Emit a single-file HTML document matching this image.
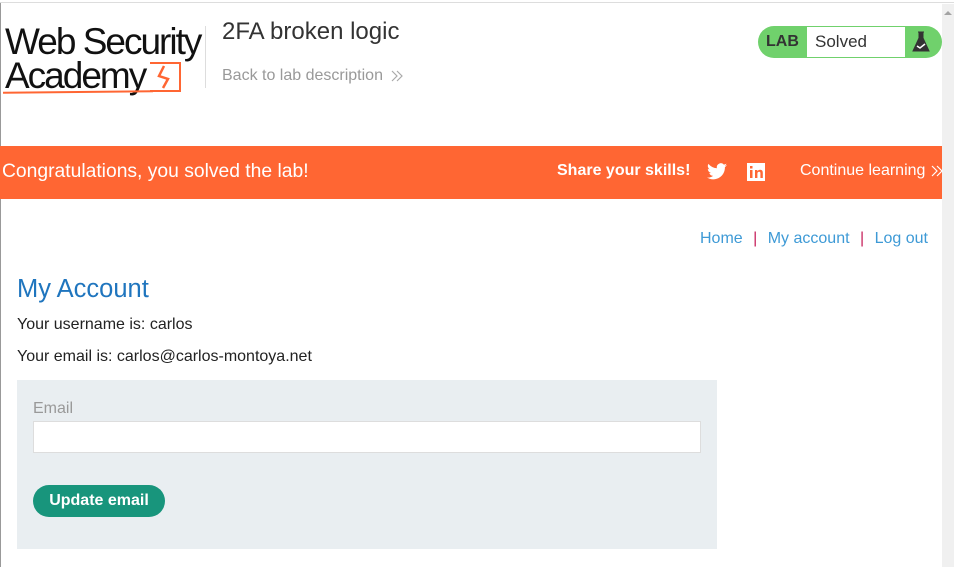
<!DOCTYPE html>
<html><head><style>
*{margin:0;padding:0;box-sizing:border-box}
body{width:954px;height:567px;overflow:hidden;background:#fff;font-family:"Liberation Sans",Arial,sans-serif;position:relative}
.abs{position:absolute}
</style></head><body>
<div class="abs" style="left:0;top:0;width:954px;height:3px;background:#fff;border-bottom:1px solid #ddd"></div>
<div class="abs" style="left:0;top:3px;width:1px;height:564px;background:#999"></div>
<div class="abs" style="left:942px;top:4px;width:12px;height:563px;background:#f0f0f0"></div>
<div class="abs" style="left:944px;top:11px;width:0;height:0;border-left:4px solid transparent;border-right:4px solid transparent;border-bottom:4px solid #a3a3a3"></div>
<!-- logo -->
<div class="abs" style="left:5px;top:25px;font-size:37px;letter-spacing:-2px;color:#111;line-height:34px">Web Security<br>Academy</div>
<div class="abs" style="left:150px;top:62px;width:31px;height:30px;border:2px solid #ff6633;border-left:none"></div>
<svg class="abs" style="left:150px;top:60px" width="32" height="35"><path d="M14 6 L9 16 L18 19 L13 28" stroke="#ff6633" stroke-width="2.5" fill="none"/></svg>
<div class="abs" style="left:3px;top:91px;width:150px;height:2px;background:#ff6633;transform:rotate(-0.6deg)"></div>
<div class="abs" style="left:205px;top:26px;width:1px;height:62px;background:#ddd"></div>
<div class="abs" style="left:222px;top:18px;font-size:24px;color:#333">2FA broken logic</div>
<div class="abs" style="left:222px;top:67px;font-size:16px;color:#999">Back to lab description</div>
<svg class="abs" style="left:390px;top:70px" width="14" height="12"><path d="M2 1l5 5-5 5M7 1l5 5-5 5" stroke="#aaa" fill="none" stroke-width="1.2"/></svg>
<!-- lab badge -->
<div class="abs" style="left:758px;top:26px;width:184px;height:32px;background:#70d16c;border-radius:16px"></div>
<div class="abs" style="left:766px;top:33px;font-size:16px;font-weight:bold;color:#333">LAB</div>
<div class="abs" style="left:807px;top:27px;width:98px;height:30px;background:#fff"></div>
<div class="abs" style="left:815px;top:32px;font-size:17px;color:#333">Solved</div>
<svg class="abs" style="left:912px;top:31px" width="18" height="22"><path d="M6 1 h6 M7 1 v6 L1 20 h16 L11 7 V1" fill="#333" stroke="#333"/><path d="M5 15 l3 2 l5-4" stroke="#fff" stroke-width="1.5" fill="none"/></svg>
<!-- banner -->
<div class="abs" style="left:0;top:146px;width:942px;height:53px;background:#ff6633"></div>
<div class="abs" style="left:2px;top:161px;font-size:19.3px;color:#fff">Congratulations, you solved the lab!</div>
<div class="abs" style="left:557px;top:162px;font-size:16px;font-weight:bold;color:#fff">Share your skills!</div>
<svg class="abs" style="left:707px;top:163px" width="20" height="17" viewBox="0 0 24 20"><path d="M24 2.4a10 10 0 0 1-2.8.8 4.9 4.9 0 0 0 2.2-2.7 9.8 9.8 0 0 1-3.1 1.2A4.9 4.9 0 0 0 11.9 6.1 14 14 0 0 1 1.7.9a4.9 4.9 0 0 0 1.5 6.6 4.9 4.9 0 0 1-2.2-.6c0 2.4 1.7 4.4 3.9 4.8a4.9 4.9 0 0 1-2.2.1 4.9 4.9 0 0 0 4.6 3.4A9.9 9.9 0 0 1 0 17.2 14 14 0 0 0 7.5 19.4c9.1 0 14-7.5 14-14v-.6A10 10 0 0 0 24 2.4z" fill="#fff"/></svg>
<svg class="abs" style="left:747px;top:163px" width="18" height="18"><rect x="0" y="0" width="18" height="18" fill="#fff"/><rect x="3" y="7" width="2.5" height="8" fill="#ff6633"/><rect x="3" y="3" width="2.5" height="2.5" fill="#ff6633"/><path d="M8 7 h2.3 v1.3 q1-1.5 3-1.5 q2.5 0 2.5 3 v5.2 h-2.4 v-4.8 q0-1.4-1.2-1.4 q-1.8 0-1.8 1.8 v4.4 H8z" fill="#ff6633"/></svg>
<div class="abs" style="left:800px;top:162px;font-size:16px;color:#fff">Continue learning</div>
<svg class="abs" style="left:930px;top:165px" width="14" height="12"><path d="M2 1l5 5-5 5M7 1l5 5-5 5" stroke="#fff" fill="none" stroke-width="1.2"/></svg>
<!-- nav -->
<div class="abs" style="left:700px;top:230px;font-size:16px;color:#3e9ad6;white-space:nowrap">Home <span style="color:#c7235d;margin:0 6px">|</span> My account <span style="color:#c7235d;margin:0 6px">|</span> Log out</div>
<div class="abs" style="left:17px;top:275px;font-size:25.5px;color:#1f75be">My Account</div>
<div class="abs" style="left:17px;top:316px;font-size:16px;color:#222">Your username is: carlos</div>
<div class="abs" style="left:17px;top:348px;font-size:16px;color:#222">Your email is: carlos@carlos-montoya.net</div>
<div class="abs" style="left:17px;top:380px;width:700px;height:169px;background:#e9eef1"></div>
<div class="abs" style="left:33px;top:400px;font-size:16px;color:#999">Email</div>
<div class="abs" style="left:33px;top:421px;width:668px;height:32px;background:#fff;border:1px solid #ddd"></div>
<div class="abs" style="left:33px;top:485px;width:132px;height:32px;background:#18957c;border-radius:16px;color:#fff;font-weight:bold;font-size:16px;text-align:center;line-height:31px">Update email</div>
</body></html>
